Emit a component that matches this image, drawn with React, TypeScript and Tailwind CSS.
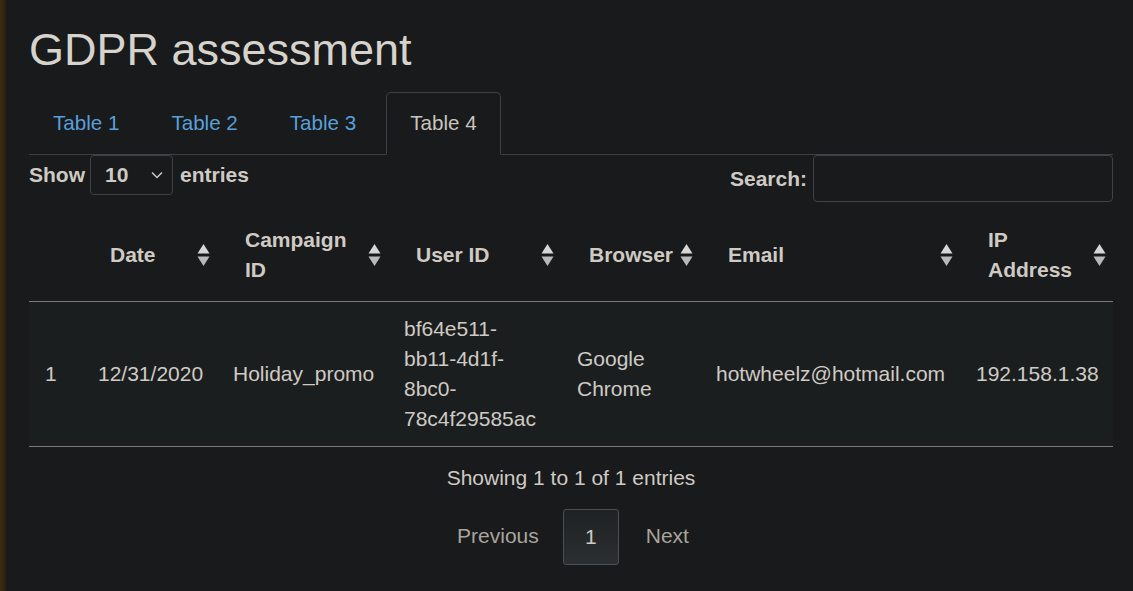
import React from "react";

interface Column {
  header: string;
  width: string;
}

const columns: Column[] = [
  { header: "", width: "w-[53px]" },
  { header: "Date", width: "w-[135px]" },
  { header: "Campaign ID", width: "w-[171px]" },
  { header: "User ID", width: "w-[173px]" },
  { header: "Browser", width: "w-[139px]" },
  { header: "Email", width: "w-[260px]" },
  { header: "IP Address", width: "w-[153px]" },
];

const row = [
  "1",
  "12/31/2020",
  "Holiday_promo",
  "bf64e511-bb11-4d1f-8bc0-78c4f29585ac",
  "Google Chrome",
  "hotwheelz@hotmail.com",
  "192.158.1.38",
];

const tabs = ["Table 1", "Table 2", "Table 3", "Table 4"];

function SortIcon() {
  return (
    <svg width="13" height="24" viewBox="0 0 13 24" className="shrink-0">
      <polygon points="6.5,1 12.5,10.5 0.5,10.5" fill="#d6d6d6" />
      <polygon points="6.5,23 12.5,13.5 0.5,13.5" fill="#b9b9b9" />
    </svg>
  );
}

export default function App() {
  return (
    <div
      className="flex min-h-screen bg-[#181a1b] text-[#cfcac4]"
      style={{ fontFamily: '"Liberation Sans", Arial, sans-serif' }}
    >
      <div className="w-[6px] shrink-0 bg-gradient-to-r from-[#3d2d0c] to-[#262012]" />

      <div className="flex-1 pl-[23px] pr-[20px] pt-[25px]">
        {/* Title */}
        <h1 className="text-[45px] leading-[50px] text-[#d6d2cc] mb-[17px]">GDPR assessment</h1>

        {/* Tabs */}
        <div className="flex border-b border-[#3c4143]">
          {tabs.map((t, i) =>
            i === 3 ? (
              <div
                key={t}
                className="-mb-px ml-[2px] px-[23px] py-[15px] text-[20.6px] leading-[30px] text-[#c9c4bd] border border-[#3c4143] border-b-[#181a1b] rounded-t-[5px] bg-[#181a1b]"
              >
                {t}
              </div>
            ) : (
              <div key={t} className="mr-[4px] px-[23px] py-[15px] text-[20.6px] leading-[30px] text-[#5a9fd9] border border-transparent">
                {t}
              </div>
            )
          )}
        </div>

        {/* Controls */}
        <div className="flex items-start justify-between">
          <div className="flex items-center gap-[5px] text-[21px] font-bold">
            <span>Show</span>
            <div className="flex h-[40px] w-[83px] items-center justify-between rounded-[4px] border border-[#3e4446] pl-[14px] pr-[9px]">
              <span>10</span>
              <svg width="12" height="8" viewBox="0 0 12 8">
                <path d="M1 1.5 L6 6.5 L11 1.5" stroke="#cfcac4" strokeWidth="1.5" fill="none" />
              </svg>
            </div>
            <span className="ml-[2px]">entries</span>
          </div>
          <div className="flex items-center gap-[6px] text-[21px] font-bold">
            <span>Search:</span>
            <div className="h-[47px] w-[300px] rounded-[4px] border border-[#3e4446]" />
          </div>
        </div>

        {/* Table */}
        <table className="mt-[9px] w-full table-fixed border-collapse text-[21px] leading-[30px]">
          <colgroup>
            {columns.map((c, i) => (
              <col key={i} className={c.width} />
            ))}
          </colgroup>
          <thead>
            <tr className="border-b border-[#7d7a75]">
              {columns.map((c, i) => (
                <th key={i} className="h-[90px] pt-[14px] pb-[16px] pl-[28px] pr-[7px] text-left font-bold align-middle">
                  {i === 0 ? null : (
                    <div className="flex items-center justify-between gap-[6px]">
                      <span>{c.header}</span>
                      <SortIcon />
                    </div>
                  )}
                </th>
              ))}
            </tr>
          </thead>
          <tbody>
            <tr className="border-b border-[#7d7a75] bg-[#1b1e1f]">
              {row.map((v, i) => (
                <td key={i} className="py-3 pl-4 pr-5 align-middle whitespace-normal">
                  {v}
                </td>
              ))}
            </tr>
          </tbody>
        </table>

        {/* Footer */}
        <div className="pt-4 text-center text-[21px] leading-[30px]">Showing 1 to 1 of 1 entries</div>
        <div className="mt-4 ml-[4px] flex justify-center text-[21px] leading-[30px]">
          <span className="px-6 py-3 text-[#aaa49c]">Previous</span>
          <span className="w-[56px] rounded-[3px] border border-[#4a4f52] bg-gradient-to-b from-[#1f2223] to-[#2c2f31] py-3 text-center">
            1
          </span>
          <span className="pl-[27px] pr-6 py-3 text-[#aaa49c]">Next</span>
        </div>
      </div>
    </div>
  );
}
